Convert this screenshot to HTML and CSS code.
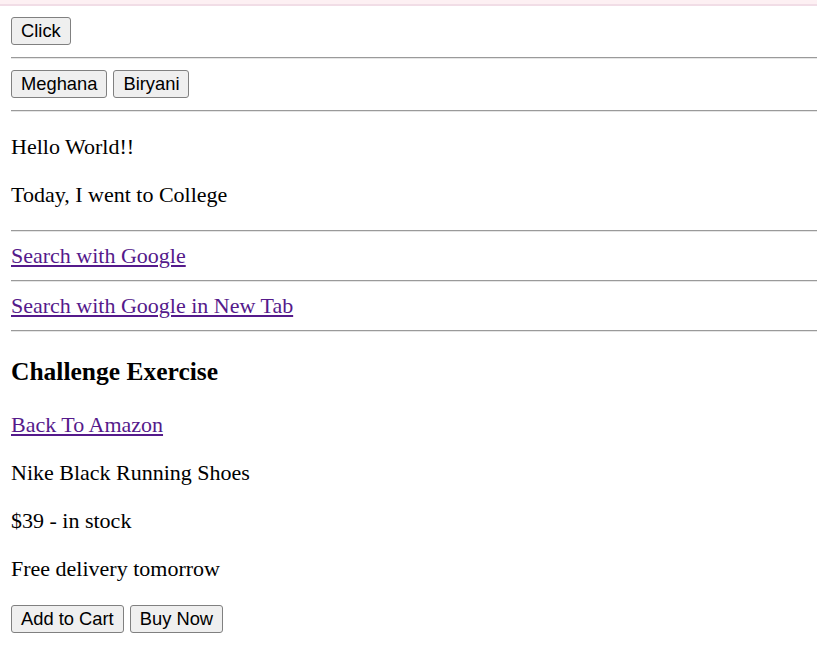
FILE: index.html
```html
<!DOCTYPE html>
<html>
<head>
<meta charset="utf-8">
<link rel="stylesheet" href="styles.css">
<title>Practice</title>
</head>
<body>
<div class="topband"></div>
<main class="page">
  <div class="btn-row first"><button class="btn">Click</button></div>
  <hr class="rule">
  <div class="btn-row"><button class="btn">Meghana</button><button class="btn">Biryani</button></div>
  <hr class="rule">
  <p class="para first-para">Hello World!!</p>
  <p class="para">Today, I went to College</p>
  <hr class="rule">
  <div class="link-line"><a class="link" href="#">Search with Google</a></div>
  <hr class="rule">
  <div class="link-line"><a class="link" href="#">Search with Google in New Tab</a></div>
  <hr class="rule">
  <h3 class="heading">Challenge Exercise</h3>
  <p class="para"><a class="link" href="#">Back To Amazon</a></p>
  <p class="para">Nike Black Running Shoes</p>
  <p class="para">$39 - in stock</p>
  <p class="para">Free delivery tomorrow</p>
  <div class="btn-row last"><button class="btn">Add to Cart</button><button class="btn">Buy Now</button></div>
</main>
</body>
</html>
```
FILE: styles.css
```css
html, body {
  margin: 0;
  padding: 0;
  background: #ffffff;
}
body {
  font-family: "Liberation Serif", "Times New Roman", serif;
  font-size: 22px;
  color: #000000;
}
.topband {
  height: 4px;
  background: #fdf0f3;
  border-bottom: 2px solid #f1dde6;
}
.page {
  padding-left: 11px;
  display: flow-root;
}
.btn-row {
  display: flex;
  gap: 6px;
  margin: 11px 0 12px;
}
.btn-row.last {
  margin-top: 23px;
}
.btn {
  box-sizing: border-box;
  height: 28px;
  padding: 0 9px;
  font-family: "Liberation Sans", Arial, sans-serif;
  font-size: 18.33px;
  color: #000000;
  background: #efefef;
  border: 1px solid #808080;
  border-radius: 3px;
  line-height: 1;
}
.rule {
  margin: 0;
  height: 0;
  border: none;
  border-top: 1px solid #9a9a9a;
  border-bottom: 1px solid #e6e6e6;
}
.para {
  margin: 22px 0;
  line-height: 26px;
}
.link-line {
  margin: 11px 0;
  line-height: 26px;
}
.link {
  color: #551a8b;
  text-decoration: underline;
  text-decoration-thickness: 2px;
  text-underline-offset: 2px;
}
.heading {
  font-size: 25.5px;
  font-weight: bold;
  line-height: 30px;
  margin: 25px 0 25px;
}
```
